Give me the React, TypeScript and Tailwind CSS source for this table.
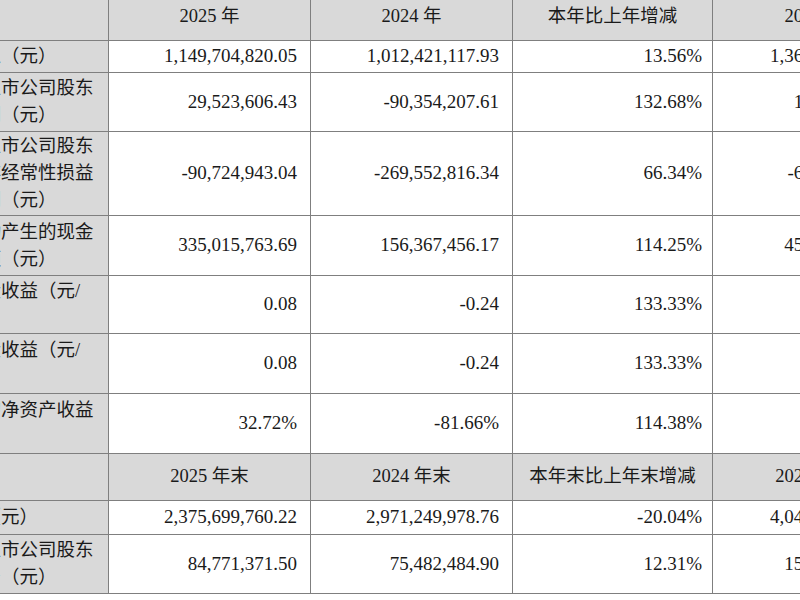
import React from "react";

type Row = { label: string[]; values: string[]; h: string };

const incomeRows: Row[] = [
	{
		label: ["营业收入（元）"],
		values: ["1,149,704,820.05", "1,012,421,117.93", "13.56%", "1,368,541,206.38"],
		h: "h-[32px]",
	},
	{
		label: ["归属于上市公司股东", "的净利润（元）"],
		values: ["29,523,606.43", "-90,354,207.61", "132.68%", "18,436,258.17"],
		h: "h-[59px]",
	},
	{
		label: ["归属于上市公司股东", "的扣除非经常性损益", "的净利润（元）"],
		values: ["-90,724,943.04", "-269,552,816.34", "66.34%", "-63,815,402.96"],
		h: "h-[84px]",
	},
	{
		label: ["经营活动产生的现金", "流量净额（元）"],
		values: ["335,015,763.69", "156,367,456.17", "114.25%", "451,273,689.52"],
		h: "h-[60px]",
	},
	{
		label: ["基本每股收益（元/", "股）"],
		values: ["0.08", "-0.24", "133.33%", "0.27"],
		h: "h-[58px]",
	},
	{
		label: ["稀释每股收益（元/", "股）"],
		values: ["0.08", "-0.24", "133.33%", "0.27"],
		h: "h-[60px]",
	},
	{
		label: ["加权平均净资产收益", "率"],
		values: ["32.72%", "-81.66%", "114.38%", "11.35%"],
		h: "h-[60px]",
	},
];

const balanceRows: Row[] = [
	{
		label: ["总资产（元）"],
		values: ["2,375,699,760.22", "2,971,249,978.76", "-20.04%", "4,042,318,675.40"],
		h: "h-[34px]",
	},
	{
		label: ["归属于上市公司股东", "的净资产（元）"],
		values: ["84,771,371.50", "75,482,484.90", "12.31%", "155,836,692.71"],
		h: "h-[59px]",
	},
];

const cell = "border border-[#7f7f7f] p-0";
const padRight = ["pr-[13px]", "pr-[13px]", "pr-[10px]", "pr-[13px]"];

const HeaderRow = ({ titles }: { titles: string[] }) => (
	<tr className="h-[47px] bg-[#d9d9d9]">
		<td className={cell}></td>
		{titles.map((t) => (
			<td key={t} className={`${cell} text-center align-middle text-[18.5px]`}>
				{t}
			</td>
		))}
	</tr>
);

const DataRow = ({ row }: { row: Row }) => (
	<tr className={row.h}>
		<td className={`${cell} bg-[#d9d9d9] pl-[6px] align-middle text-[18.5px] leading-[27px]`}>
			{row.label.map((l, i) => (
				<div key={i} className="whitespace-nowrap">
					{l}
				</div>
			))}
		</td>
		{row.values.map((v, i) => (
			<td
				key={i}
				className={`${cell} ${padRight[i]} bg-white text-right align-middle text-[19px] whitespace-nowrap`}
			>
				{v}
			</td>
		))}
	</tr>
);

export default function App() {
	return (
		<div
			className="w-[800px] h-[600px] overflow-hidden bg-white text-[#1a1a1a]"
			style={{ fontFamily: '"Liberation Serif", "Noto Sans CJK SC", serif' }}
		>
			{/* the table is wider than the shot; its left and right columns run off the edges */}
			<table className="table-fixed border-collapse -ml-[80px] -mt-[7px] w-[996px]">
				<colgroup>
					<col className="w-[188px]" />
					<col className="w-[202px]" />
					<col className="w-[202px]" />
					<col className="w-[200px]" />
					<col className="w-[204px]" />
				</colgroup>
				<tbody>
					<HeaderRow titles={["2025 年", "2024 年", "本年比上年增减", "2023 年"]} />
					{incomeRows.map((r) => (
						<DataRow key={r.label.join("")} row={r} />
					))}
					<HeaderRow
						titles={["2025 年末", "2024 年末", "本年末比上年末增减", "2023 年末"]}
					/>
					{balanceRows.map((r) => (
						<DataRow key={r.label.join("")} row={r} />
					))}
				</tbody>
			</table>
		</div>
	);
}
